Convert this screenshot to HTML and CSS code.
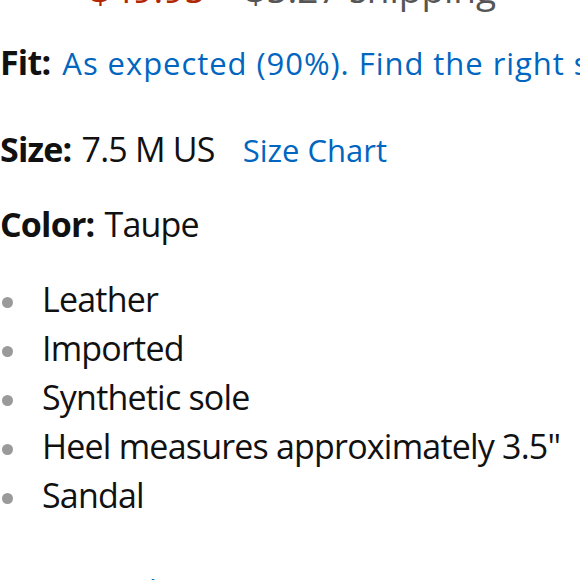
FILE: index.html
```html
<!DOCTYPE html>
<html>
<head>
<meta charset="utf-8">
<link rel="stylesheet" href="styles.css">
</head>
<body>
<div class="page">
  <div class="row price-row">
    <span class="price">$49.95</span>
    <span class="shipping">$5.27 shipping</span>
  </div>
  <div class="row fit-row">
    <span class="label">Fit:</span> <span class="link fit-link">As expected (90%). Find the right size</span>
  </div>
  <div class="row size-row">
    <span class="label">Size:</span> <span class="value">7.5 M US</span>
    <span class="link chart">Size Chart</span>
  </div>
  <div class="row color-row">
    <span class="label">Color:</span> <span class="value">Taupe</span>
  </div>
  <ul class="features">
    <li>Leather</li>
    <li>Imported</li>
    <li>Synthetic sole</li>
    <li>Heel measures approximately 3.5"</li>
    <li>Sandal</li>
  </ul>
  <div class="row more-row">
    <span class="link">Visit the Vince Camuto Store</span>
  </div>
</div>
</body>
</html>
```
FILE: styles.css
```css
html, body {
  margin: 0;
  padding: 0;
  background: #ffffff;
  overflow: hidden;
}
.page {
  font-family: "Open Sans", "Liberation Sans", sans-serif;
  font-size: 34px;
  line-height: 49px;
  letter-spacing: -0.8px;
  color: #111111;
  margin-top: -36px;
  white-space: nowrap;
}
.row {
  height: 49px;
}
.price-row {
  padding-left: 90px;
  font-size: 37px;
  letter-spacing: 0;
}
.price {
  color: #b12704;
}
.shipping {
  color: #555555;
  margin-left: 30px;
}
.fit-row {
  margin-top: 25px;
}
.size-row {
  margin-top: 38px;
}
.color-row {
  margin-top: 26px;
}
.label {
  font-weight: 700;
}
.value {
  margin-left: 2px;
}
.link {
  color: #0066c0;
  font-size: 31px;
  letter-spacing: 0;
}
.fit-link {
  margin-left: 4px;
  letter-spacing: 0.95px;
}
.chart {
  margin-left: 20px;
}
.features {
  list-style: none;
  margin: 26px 0 0 0;
  padding: 0;
}
.features li {
  position: relative;
  padding-left: 42px;
  height: 49px;
}
.features li::before {
  content: "";
  position: absolute;
  left: 2px;
  top: 22px;
  width: 11px;
  height: 11px;
  border-radius: 50%;
  background: #9a9a9a;
}
.more-row {
  margin-top: 45px;
  padding-left: 70px;
}
```
